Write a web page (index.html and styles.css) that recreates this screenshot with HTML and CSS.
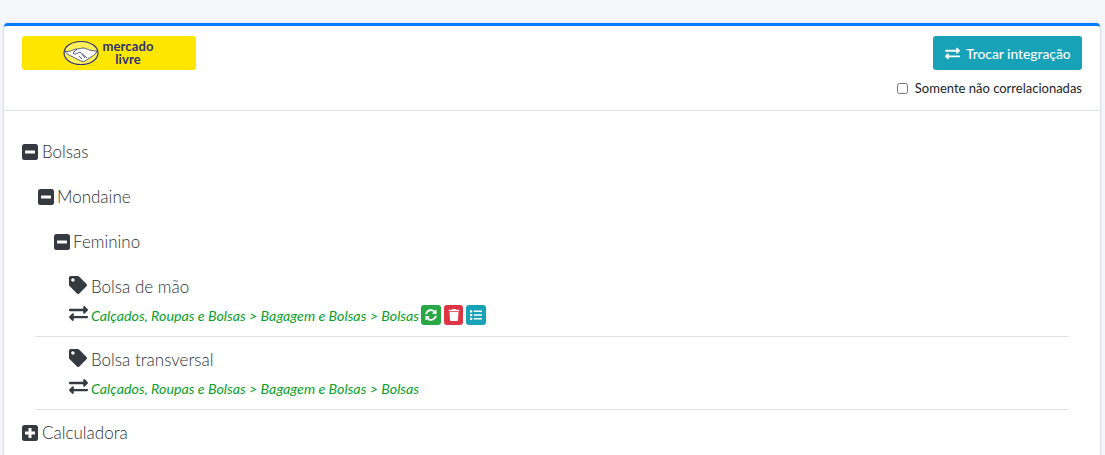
FILE: index.html

```html
<!DOCTYPE html>
<html lang="pt-BR">
<head>
  <meta charset="UTF-8" />
  <title>Correlacionar categorias</title>
  <link rel="stylesheet" href="styles.css">
</head>
<body>
  <div class="card">
    <div class="card-header">
      <div class="logo">
        <svg class="logo-mark" viewBox="0 0 36 26" width="36" height="26">
          <ellipse cx="18" cy="13" rx="17" ry="11.5" fill="#fff159" stroke="#2d3277" stroke-width="1.2"/>
          <path d="M2 11c5 2 8-2 12-2 3 0 4-1 6-1 3 0 6 3 14 3-1 3-4 5-6 6l-6 4c-2 1-4 0-6-1l-8-4c-2-1-5-2-6-5z" fill="#fff" stroke="#2d3277" stroke-width=".8"/>
          <path d="M14 9l-4 4c1 2 3 1 5 0l2-1 7 6M19 14l3 4M16 16l3 3" fill="none" stroke="#2d3277" stroke-width=".8"/>
        </svg>
        <div class="logo-text">mercado<br>livre</div>
      </div>
      <div class="header-actions">
        <button class="btn-trocar">
          <svg class="fa" viewBox="0 0 512 512" width="15" height="15"><path fill="#fff" d="M0 168v-16c0-13 11-24 24-24h360V80c0-21 26-32 41-17l80 80c9 9 9 25 0 34l-80 80c-15 15-41 4-41-17v-48H24c-13 0-24-11-24-24zm488 152H128v-48c0-21-26-32-41-17L7 335c-9 9-9 25 0 34l80 80c15 15 41 5 41-17v-48h360c13 0 24-11 24-24v-16c0-13-11-24-24-24z"/></svg>
          Trocar integração
        </button>
        <label class="check-row"><input type="checkbox"> Somente não correlacionadas</label>
      </div>
    </div>

    <div class="tree">
      <div class="node">
        <svg class="sq" viewBox="0 0 16 16"><rect width="16" height="16" rx="2.5" fill="#343a40"/><rect x="3" y="6.5" width="10" height="3" rx=".6" fill="#fff"/></svg>
        <span>Bolsas</span>
      </div>
      <div class="node lvl1">
        <svg class="sq" viewBox="0 0 16 16"><rect width="16" height="16" rx="2.5" fill="#343a40"/><rect x="3" y="6.5" width="10" height="3" rx=".6" fill="#fff"/></svg>
        <span>Mondaine</span>
      </div>
      <div class="node lvl2">
        <svg class="sq" viewBox="0 0 16 16"><rect width="16" height="16" rx="2.5" fill="#343a40"/><rect x="3" y="6.5" width="10" height="3" rx=".6" fill="#fff"/></svg>
        <span>Feminino</span>
      </div>

      <div class="leaf">
        <div class="leaf-name">
          <svg class="tag" viewBox="0 0 512 512"><path fill="#343a40" d="M0 252V48C0 21 21 0 48 0h204c13 0 25 5 34 14l212 212c19 19 19 49 0 68L294 498c-19 19-49 19-68 0L14 286C5 277 0 265 0 252zm112-188c-27 0-48 21-48 48s21 48 48 48 48-21 48-48-21-48-48-48z"/></svg>
          <span>Bolsa de mão</span>
        </div>
        <div class="leaf-path">
          <svg class="swap" viewBox="0 0 512 512"><path fill="#343a40" d="M0 168v-16c0-13 11-24 24-24h360V80c0-21 26-32 41-17l80 80c9 9 9 25 0 34l-80 80c-15 15-41 4-41-17v-48H24c-13 0-24-11-24-24zm488 152H128v-48c0-21-26-32-41-17L7 335c-9 9-9 25 0 34l80 80c15 15 41 5 41-17v-48h360c13 0 24-11 24-24v-16c0-13-11-24-24-24z"/></svg>
          <em>Calçados, Roupas e Bolsas &gt; Bagagem e Bolsas &gt; Bolsas</em>
          <span class="mini green"><svg viewBox="0 0 512 512"><path fill="#fff" d="M370 133A168 168 0 0 0 89 213c-1 6-6 11-12 11H20c-8 0-14-7-12-15C29 95 129 8 248 8c65 0 125 26 169 69l35-35c15-15 41-5 41 17v134c0 13-11 24-24 24H335c-21 0-32-26-17-41l52-43zM32 296h134c21 0 32 26 17 41l-42 42a168 168 0 0 0 281-80c1-6 6-11 12-11h57c8 0 14 7 12 15-21 114-121 201-240 201-65 0-125-26-169-69l-35 35c-15 15-41 5-41-17V320c0-13 11-24 24-24z"/></svg></span>
          <span class="mini red"><svg viewBox="0 0 448 512"><path fill="#fff" d="M432 32H312l-9-19A24 24 0 0 0 281 0H167a24 24 0 0 0-21 13l-9 19H16C7 32 0 39 0 48v32c0 9 7 16 16 16h416c9 0 16-7 16-16V48c0-9-7-16-16-16zM53 467c2 25 23 45 48 45h246c25 0 46-20 48-45l21-339H32l21 339z"/></svg></span>
          <span class="mini teal"><svg viewBox="0 0 512 512"><path fill="#fff" d="M80 368H16c-9 0-16 7-16 16v64c0 9 7 16 16 16h64c9 0 16-7 16-16v-64c0-9-7-16-16-16zm0-320H16C7 48 0 55 0 64v64c0 9 7 16 16 16h64c9 0 16-7 16-16V64c0-9-7-16-16-16zm0 160H16c-9 0-16 7-16 16v64c0 9 7 16 16 16h64c9 0 16-7 16-16v-64c0-9-7-16-16-16zm416 176H176c-9 0-16 7-16 16v32c0 9 7 16 16 16h320c9 0 16-7 16-16v-32c0-9-7-16-16-16zm0-320H176c-9 0-16 7-16 16v32c0 9 7 16 16 16h320c9 0 16-7 16-16V80c0-9-7-16-16-16zm0 160H176c-9 0-16 7-16 16v32c0 9 7 16 16 16h320c9 0 16-7 16-16v-32c0-9-7-16-16-16z"/></svg></span>
        </div>
      </div>

      <div class="leaf">
        <div class="leaf-name">
          <svg class="tag" viewBox="0 0 512 512"><path fill="#343a40" d="M0 252V48C0 21 21 0 48 0h204c13 0 25 5 34 14l212 212c19 19 19 49 0 68L294 498c-19 19-49 19-68 0L14 286C5 277 0 265 0 252zm112-188c-27 0-48 21-48 48s21 48 48 48 48-21 48-48-21-48-48-48z"/></svg>
          <span>Bolsa transversal</span>
        </div>
        <div class="leaf-path">
          <svg class="swap" viewBox="0 0 512 512"><path fill="#343a40" d="M0 168v-16c0-13 11-24 24-24h360V80c0-21 26-32 41-17l80 80c9 9 9 25 0 34l-80 80c-15 15-41 4-41-17v-48H24c-13 0-24-11-24-24zm488 152H128v-48c0-21-26-32-41-17L7 335c-9 9-9 25 0 34l80 80c15 15 41 5 41-17v-48h360c13 0 24-11 24-24v-16c0-13-11-24-24-24z"/></svg>
          <em>Calçados, Roupas e Bolsas &gt; Bagagem e Bolsas &gt; Bolsas</em>
        </div>
      </div>

      <div class="node">
        <svg class="sq" viewBox="0 0 16 16"><rect width="16" height="16" rx="2.5" fill="#343a40"/><path d="M6.5 3h3v3.500H13v3H9.500V13h-3V9.500H3v-3h3.500z" fill="#fff"/></svg>
        <span>Calculadora</span>
      </div>
    </div>
  </div>
</body>
</html>
```

FILE: styles.css

```css
html, body {
  height: 100%;
}
body {
  margin: 0;
  padding: 23px 5px 0 4px;
  box-sizing: border-box;
  overflow: hidden;
  background: #f4f6f9;
  font-family: "Lato", sans-serif;
  color: #2b3036;
}
.card {
  background: white;
  border-top: 3px solid #007bff;
  border-radius: 4px 4px 0 0;
  box-shadow: 0 0 1px rgba(0,0,0,0.125), 0 1px 3px rgba(0,0,0,0.2);
  height: 440px;
  overflow: hidden;
}
.card-header {
  display: flex;
  justify-content: space-between;
  align-items: flex-start;
  box-sizing: border-box;
  height: 85px;
  padding: 10px 18px 0;
  border-bottom: 1px solid #dee2e6;
}
.logo {
  width: 174px;
  height: 34px;
  padding-right: 2px;
  box-sizing: border-box;
  background: #ffe600;
  border-radius: 3px;
  display: flex;
  justify-content: center;
  align-items: center;
  gap: 4px;
}
.logo-mark {
  flex: none;
}
.logo-text {
  font-size: 13px;
  font-weight: 700;
  line-height: 13px;
  text-align: center;
  letter-spacing: 0.1px;
  color: #2d3277;
}
.header-actions {
  display: flex;
  flex-direction: column;
  align-items: flex-end;
  gap: 10px;
}
.btn-trocar {
  display: flex;
  align-items: center;
  gap: 6px;
  width: 149px;
  height: 34px;
  padding: 0 0 0 12px;
  border: 0;
  border-radius: 3px;
  background: #17a2b8;
  color: white;
  font-family: "Lato", sans-serif;
  font-size: 13.8px;
  font-weight: 500;
  white-space: nowrap;
}
.btn-trocar .fa {
  flex: none;
}
.check-row {
  display: flex;
  align-items: center;
  font-size: 13px;
  line-height: 16px;
  color: #212529;
}
.check-row input {
  width: 11px;
  height: 11px;
  margin: 0 7px 0 0;
}
.tree {
  padding: 18px 18px 0;
}
.node {
  display: flex;
  align-items: center;
  height: 45px;
  font-size: 17px;
  font-weight: 300;
  gap: 4px;
}
.lvl1 { padding-left: 16px; gap: 3px; }
.lvl2 { padding-left: 32px; gap: 3px; }
.sq {
  width: 16px;
  height: 16px;
  flex: none;
}
.leaf {
  margin: 0 13px 0 13px;
  padding: 0 0 0 34px;
  height: 73px;
  box-sizing: border-box;
  border-bottom: 1px solid #dee2e6;
}
.leaf-name {
  display: flex;
  align-items: center;
  gap: 4px;
  height: 44px;
  font-size: 17px;
  font-weight: 300;
}
.leaf-name .tag {
  width: 18px;
  height: 18px;
  margin-top: -3px;
}
.leaf-path {
  display: flex;
  align-items: center;
  gap: 3px;
  height: 14px;
  font-size: 14.25px;
  color: #0a9f2a;
}
.leaf-path .swap {
  width: 19px;
  height: 19px;
  margin-top: -3px;
  flex: none;
}
.mini {
  width: 20px;
  height: 20px;
  border-radius: 3px;
  display: flex;
  align-items: center;
  justify-content: center;
}
.mini svg {
  width: 12px;
  height: 12px;
}
.green { background: #28a745; margin-left: -1px; }
.red { background: #dc3545; width: 19px; }
.teal { background: #17a2b8; }
```
